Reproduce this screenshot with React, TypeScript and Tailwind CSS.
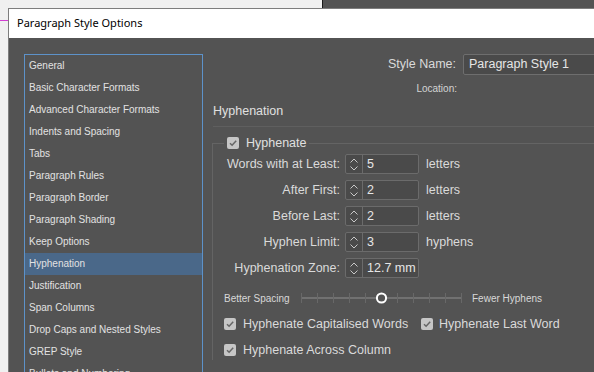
const sections = [
  "General",
  "Basic Character Formats",
  "Advanced Character Formats",
  "Indents and Spacing",
  "Tabs",
  "Paragraph Rules",
  "Paragraph Border",
  "Paragraph Shading",
  "Keep Options",
  "Hyphenation",
  "Justification",
  "Span Columns",
  "Drop Caps and Nested Styles",
  "GREP Style",
  "Bullets and Numbering",
];

const fields = [
  { label: "Words with at Least:", value: "5", unit: "letters" },
  { label: "After First:", value: "2", unit: "letters" },
  { label: "Before Last:", value: "2", unit: "letters" },
  { label: "Hyphen Limit:", value: "3", unit: "hyphens" },
  { label: "Hyphenation Zone:", value: "12.7 mm", unit: "" },
];

function Check() {
  return (
    <span className="flex h-[12px] w-[12px] shrink-0 items-center justify-center rounded-[2px] bg-[#c6c6c6]">
      <svg width="12" height="12" viewBox="0 0 12 12" fill="none">
        <path d="M3 6.3 L5.1 8.3 L9.2 3.8" stroke="#666666" strokeWidth="1.5" />
      </svg>
    </span>
  );
}

function Spinner({ value }: { value: string }) {
  return (
    <div className="flex h-[20px] w-[74px] shrink-0 overflow-hidden rounded-[2px] border border-[#6b6b6b] bg-[#4a4a4a]">
      <div className="flex w-[17px] flex-col items-center justify-center gap-[3px] border-r border-[#6b6b6b]">
        <svg width="8" height="5" viewBox="0 0 8 5" fill="none">
          <path d="M0.5 4.5 L4 1 L7.5 4.5" stroke="#c8c8c8" strokeWidth="1" />
        </svg>
        <svg width="8" height="5" viewBox="0 0 8 5" fill="none">
          <path d="M0.5 0.5 L4 4 L7.5 0.5" stroke="#c8c8c8" strokeWidth="1" />
        </svg>
      </div>
      <div className="flex-1 overflow-hidden whitespace-nowrap pl-[4px] leading-[18px] text-[#e6e6e6]">
        {value}
      </div>
    </div>
  );
}

function Slider() {
  const ticks = Array.from({ length: 11 }, (_, i) => i * 16 + 0.5);
  return (
    <svg width="161" height="14" viewBox="0 0 161 14">
      <line x1="0" y1="7" x2="161" y2="7" stroke="#717171" strokeWidth="2" />
      {ticks.map((x) => (
        <line key={x} x1={x} y1="2" x2={x} y2="12" stroke="#686868" strokeWidth="1" />
      ))}
      <circle cx="80.5" cy="7" r="4.6" fill="#535353" stroke="#ffffff" strokeWidth="2" />
    </svg>
  );
}

export default function App() {
  return (
    <div className="relative h-[372px] w-[594px] overflow-hidden bg-[#f0f0f0] font-['Liberation_Sans',Arial,sans-serif]">
      {/* desktop behind the dialog */}
      <div className="flex h-[8px]">
        <div className="w-[322px]" />
        <div className="flex-1 border-l border-[#1a1a1a] bg-[#535353]" />
      </div>
      <span className="absolute left-0 top-[20px] h-px w-[8px] bg-[#d23fd2]" />

      <div className="ml-[8px] w-[720px] border-l border-t border-[#7d7d7d]">
        {/* title bar */}
        <div className="flex h-[29px] items-center bg-white pl-[8px] font-['Segoe_UI','Noto_Sans',sans-serif] text-[11px] text-black">
          Paragraph Style Options
        </div>

        <div className="flex h-[400px] bg-[#535353] pl-[15px] pt-[16px] text-[12.5px] text-[#dadada]">
          {/* section list */}
          <div className="h-[340px] w-[179px] shrink-0 overflow-hidden border border-[#5d92c9]">
            {sections.map((s) => (
              <div
                key={s}
                className={`h-[22px] whitespace-nowrap pl-[4px] text-[10px] leading-[22px] text-[#e2e2e2] ${
                  s === "Hyphenation" ? "bg-[#4a6889]" : ""
                }`}
              >
                {s}
              </div>
            ))}
          </div>

          {/* options panel */}
          <div className="flex-1 pl-[10px]">
            <div className="flex h-[21px] items-center">
              <div className="w-[243px] text-right">Style Name:</div>
              <div className="ml-[7px] h-[21px] w-[260px] rounded-[2px] border border-[#6e6e6e] bg-[#4a4a4a] pl-[5px] leading-[19px] text-[#e6e6e6]">
                Paragraph Style 1
              </div>
            </div>
            <div className="mt-[7px] h-[14px] w-[244px] text-right text-[10px] leading-[14px] text-[#d4d4d4]">
              Location:
            </div>

            <div className="mt-[6px] h-[18px] leading-[18px] text-[#e0e0e0]">Hyphenation</div>
            <div className="mt-[6px] h-px bg-[#5f5f5f]" />

            <fieldset className="ml-[-1px] mt-[9px] border-l border-t border-[#646464] px-[11px] pt-[4px]">
              <legend className="flex h-[14px] items-center gap-[7px] px-[3px] leading-[14px] text-[#e0e0e0]">
                <Check />
                <span>Hyphenate</span>
              </legend>

              <div className="flex flex-col gap-[6px]">
                {fields.map((f) => (
                  <div key={f.label} className="flex h-[20px] items-center">
                    <div className="w-[116px] whitespace-nowrap text-right">{f.label}</div>
                    <div className="ml-[5px]">
                      <Spinner value={f.value} />
                    </div>
                    {f.unit && <div className="ml-[7px]">{f.unit}</div>}
                  </div>
                ))}
              </div>

              <div className="mt-[10px] flex h-[20px] items-center text-[10px] text-[#d8d8d8]">
                <div className="w-[77px] whitespace-nowrap">Better Spacing</div>
                <Slider />
                <div className="ml-[10px] whitespace-nowrap">Fewer Hyphens</div>
              </div>

              <div className="mt-[6px] flex flex-col gap-[6px]">
                <div className="flex h-[20px] items-center">
                  <div className="flex w-[197px] items-center gap-[7px]">
                    <Check />
                    <span className="whitespace-nowrap">Hyphenate Capitalised Words</span>
                  </div>
                  <div className="flex items-center gap-[6px]">
                    <Check />
                    <span className="whitespace-nowrap">Hyphenate Last Word</span>
                  </div>
                </div>
                <div className="flex h-[20px] items-center gap-[7px]">
                  <Check />
                  <span className="whitespace-nowrap">Hyphenate Across Column</span>
                </div>
              </div>
            </fieldset>
          </div>
        </div>
      </div>
    </div>
  );
}
